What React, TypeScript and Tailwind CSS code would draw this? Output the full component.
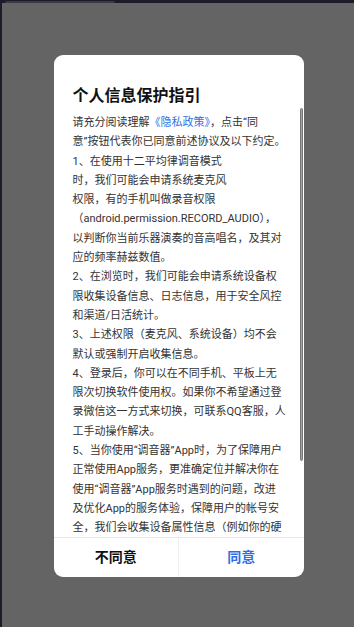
const lines: React.ReactNode[] = [
  <>
    请充分阅读理解<span className="text-[#2f6fe4]">《隐私政策》</span>，点击“同
  </>,
  "意”按钮代表你已同意前述协议及以下约定。",
  "1、在使用十二平均律调音模式",
  "时，我们可能会申请系统麦克风",
  "权限，有的手机叫做录音权限",
  "（android.permission.RECORD_AUDIO），",
  "以判断你当前乐器演奏的音高唱名，及其对",
  "应的频率赫兹数值。",
  "2、在浏览时，我们可能会申请系统设备权",
  "限收集设备信息、日志信息，用于安全风控",
  "和渠道/日活统计。",
  "3、上述权限（麦克风、系统设备）均不会",
  "默认或强制开启收集信息。",
  "4、登录后，你可以在不同手机、平板上无",
  "限次切换软件使用权。如果你不希望通过登",
  "录微信这一方式来切换，可联系QQ客服，人",
  "工手动操作解决。",
  "5、当你使用“调音器”App时，为了保障用户",
  "正常使用App服务，更准确定位并解决你在",
  "使用“调音器”App服务时遇到的问题，改进",
  "及优化App的服务体验，保障用户的帐号安",
  "全，我们会收集设备属性信息（例如你的硬",
];

export default function App() {
  return (
    <div className="flex h-[627px] w-[354px] flex-col overflow-hidden bg-[#646464] font-['Roboto','Noto_Sans_CJK_SC',sans-serif]">
      <div className="h-[3px] shrink-0 bg-[#1d1b27] px-[5px] pt-[1px]">
        <div className="h-[2px] w-[110px] rounded-t-sm bg-[#3b3a44]" />
      </div>
      <div className="flex flex-1">
        <div className="w-[2px] bg-[#1d1b27]" />
        <div className="flex flex-1 items-center justify-center pl-[1px] pt-[2px]">
          <div className="flex h-[522px] w-[250px] flex-col overflow-hidden rounded-[9px] bg-white">
            <h2 className="px-[19px] pt-[29px] text-[16px] font-bold leading-[24px] text-[#111]">个人信息保护指引</h2>
            <div className="relative min-h-0 flex-1">
              <div className="h-full overflow-hidden px-[19px] pt-[5px] text-[11px] leading-[19.3px] text-[#333]">
                {lines.map((line, i) => (
                  <div key={i} className="whitespace-nowrap">
                    {line}
                  </div>
                ))}
              </div>
              <div className="absolute right-[1px] top-0 h-[353px] w-[3px] rounded-full border border-[#777] bg-[#a0a0a0]" />
            </div>
            <div className="flex h-[40px] shrink-0 border-t border-[#e6e6e6] text-[14px] font-bold">
              <button className="flex-1 text-[#111]">不同意</button>
              <div className="w-px bg-[#efefef]" />
              <button className="flex-1 text-[#2f6fe4]">同意</button>
            </div>
          </div>
        </div>
      </div>
    </div>
  );
}
